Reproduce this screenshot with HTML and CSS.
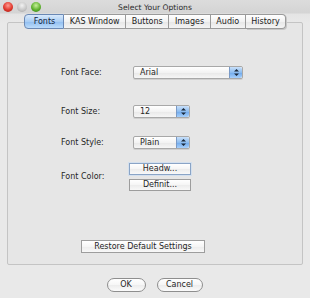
FILE: index.html
```
<!DOCTYPE html>
<html lang="en">
<head>
  <meta charset="UTF-8">
  <title>Select Your Options</title>
  <link rel="stylesheet" href="styles.css">
</head>
<body>
  <div class="window">
    <div class="titlebar">
      <div class="lights">
        <span class="light red"></span>
        <span class="light gray"></span>
        <span class="light green"></span>
      </div>
      <div class="title">Select Your Options</div>
      <div></div>
    </div>

    <!-- tab strip sits on top of the panel border -->
    <div class="tabs">
      <div class="tab active">Fonts</div>
      <div class="tab">KAS Window</div>
      <div class="tab">Buttons</div>
      <div class="tab">Images</div>
      <div class="tab">Audio</div>
      <div class="tab">History</div>
    </div>

    <div class="panel">
      <div class="row row-face">
        <div class="label">Font Face:</div>
        <div class="select wide"><span>Arial</span><i class="stepper"><svg width="7" height="9" viewBox="0 0 7 9"><path d="M3.5 1 L6 3.6 L1 3.6 Z M1 5.4 L6 5.4 L3.5 8 Z" fill="#1d2a3a"/></svg></i></div>
      </div>
      <div class="row row-size">
        <div class="label">Font Size:</div>
        <div class="select"><span>12</span><i class="stepper"><svg width="7" height="9" viewBox="0 0 7 9"><path d="M3.5 1 L6 3.6 L1 3.6 Z M1 5.4 L6 5.4 L3.5 8 Z" fill="#1d2a3a"/></svg></i></div>
      </div>
      <div class="row row-style">
        <div class="label">Font Style:</div>
        <div class="select"><span>Plain</span><i class="stepper"><svg width="7" height="9" viewBox="0 0 7 9"><path d="M3.5 1 L6 3.6 L1 3.6 Z M1 5.4 L6 5.4 L3.5 8 Z" fill="#1d2a3a"/></svg></i></div>
      </div>
      <div class="row row-color">
        <div class="label">Font Color:</div>
        <div class="stack">
          <button class="btn focus">Headw...</button>
          <button class="btn">Definit...</button>
        </div>
      </div>
      <div class="restore-wrap">
        <button class="btn restore">Restore Default Settings</button>
      </div>
    </div>

    <div class="actions">
      <button class="pill ok">OK</button>
      <button class="pill cancel">Cancel</button>
    </div>
  </div>
</body>
</html>
```

FILE: styles.css
```
body {
  margin: 0;
  font-family: "DejaVu Sans", "Noto Sans", sans-serif;
  font-size: 8px;
  color: #262626;
  background: #e9e9e9;
}
.window {
  width: 310px;
  height: 298px;
  background: linear-gradient(#dcdcdc 0px, #d4d4d4 13px, #e4e4e4 14px, #e9e9e9 24px);
  overflow: hidden;
}
.titlebar {
  height: 13px;
  display: grid;
  grid-template-columns: 1fr auto 1fr;
  align-items: center;
}
.lights {
  display: flex;
  gap: 4px;
  padding-left: 3px;
}
.light {
  width: 10px;
  height: 10px;
  border-radius: 50%;
  box-sizing: border-box;
}
.light.red {
  background: radial-gradient(circle at 50% 35%, #ff9a90 0, #e0372c 55%, #9c1a12 100%);
}
.light.gray {
  background: radial-gradient(circle at 50% 35%, #f2f2f2 0, #c4c4c4 60%, #9a9a9a 100%);
}
.light.green {
  background: radial-gradient(circle at 50% 35%, #c8f09a 0, #5fb12e 55%, #2f7a12 100%);
}
.title {
  font-size: 7.6px;
  color: #2a2a2a;
  padding-top: 1px;
}
.tabs {
  display: flex;
  justify-content: center;
  margin-top: 1px;
  margin-bottom: -7px;
  position: relative;
  z-index: 2;
}
.tab {
  height: 13px;
  line-height: 13px;
  padding: 0 5.6px;
  border: 1px solid #9a9a9a;
  border-left: none;
  background: linear-gradient(#ffffff, #f2f2f2 50%, #e6e6e6 51%, #f4f4f4);
  color: #222;
}
.tab:first-child {
  border-left: 1px solid #7d93b3;
  border-radius: 4px 0 0 4px;
}
.tab:last-child {
  border-radius: 0 4px 4px 0;
  box-shadow: 1px 1px 0 #c6c6c6;
}
.tab.active {
  background: linear-gradient(#d8e9fb, #a9cdf4 50%, #8fbdf0 51%, #bcdcfb);
  border-color: #6a88b4;
  padding: 0 8px 0 9px;
  color: #10243e;
}
.panel {
  margin: 0 7px;
  height: 243px;
  box-sizing: border-box;
  border: 1px solid #c4c4c4;
  border-radius: 2px;
  background: #e6e6e6;
  padding-left: 53px;
}
.row {
  display: flex;
  align-items: center;
}
.label {
  width: 72px;
}
.row-face {
  margin-top: 43px;
}
.row-size {
  margin-top: 26px;
}
.row-style {
  margin-top: 18px;
}
.row-color {
  margin-top: 12px;
}
.select {
  width: 57px;
  height: 13px;
  box-sizing: border-box;
  border: 1px solid #a8a8a8;
  border-radius: 2px;
  background: linear-gradient(#ffffff, #f3f3f3 50%, #e8e8e8 51%, #f6f6f6);
  display: flex;
  align-items: center;
  justify-content: space-between;
  box-shadow: 0 1px 0 #cfcfcf;
}
.select.wide {
  width: 110px;
}
.select span {
  padding-left: 6px;
}
.stepper {
  width: 12px;
  height: 11px;
  background: linear-gradient(#c9e0fa, #8cbcef 50%, #6ea8eb 51%, #a7d0fb);
  border-left: 1px solid #7a9ac6;
  border-radius: 0 2px 2px 0;
  display: flex;
  align-items: center;
  justify-content: center;
}
.stack {
  display: flex;
  flex-direction: column;
  gap: 4px;
  margin-left: -4px;
  margin-top: 2px;
}
.btn {
  font-family: inherit;
  font-size: 8px;
  color: #262626;
  height: 12px;
  width: 62px;
  padding: 0;
  border: 1px solid #9d9d9d;
  background: linear-gradient(#ffffff, #f5f5f5 50%, #ececec 51%, #f8f8f8);
  line-height: 10px;
}
.btn.focus {
  border-color: #8aa4c6;
  box-shadow: 0 0 0 1px #d4e0ee;
}
.restore-wrap {
  margin-top: 49px;
  padding-left: 20px;
}
.btn.restore {
  width: 124px;
  height: 13px;
}
.actions {
  display: flex;
  justify-content: center;
  gap: 11px;
  margin-top: 13px;
  padding-right: 1px;
}
.pill {
  font-family: inherit;
  font-size: 8px;
  color: #262626;
  height: 14px;
  padding: 0;
  border: 1px solid #8e8e8e;
  border-radius: 7px;
  background: linear-gradient(#ffffff, #f6f6f6 50%, #ececec 51%, #fbfbfb);
  line-height: 12px;
}
.pill.ok {
  width: 39px;
}
.pill.cancel {
  width: 46px;
}
```
